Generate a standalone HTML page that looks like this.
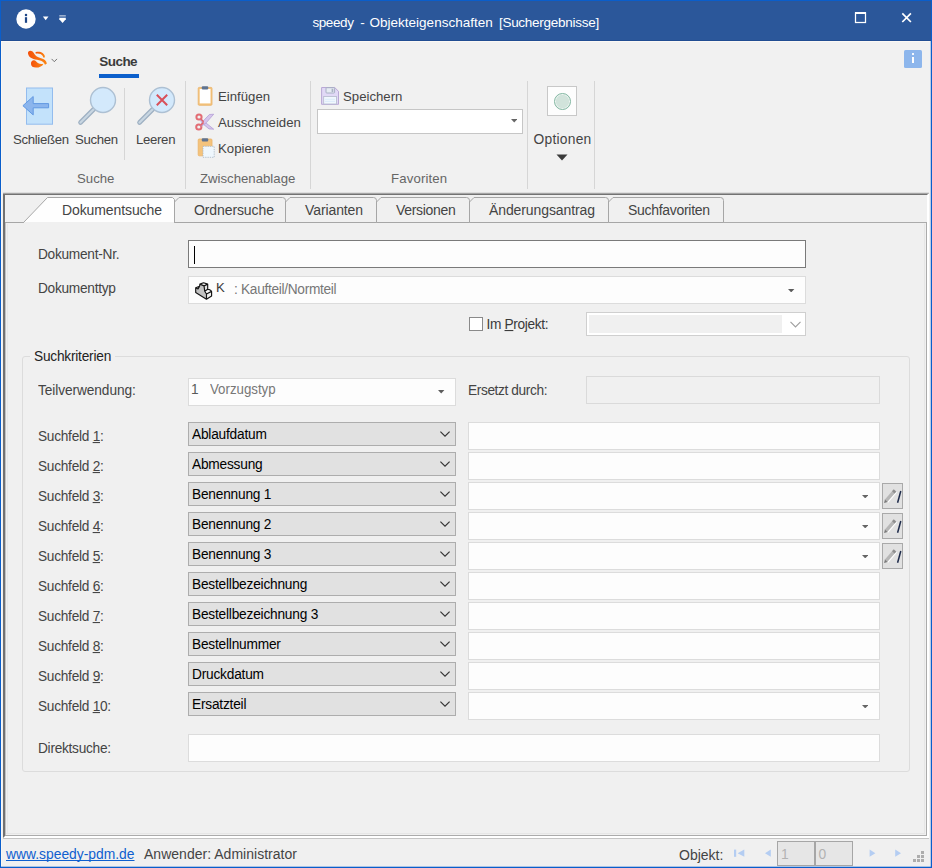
<!DOCTYPE html>
<html><head><meta charset="utf-8">
<style>
html,body{margin:0;padding:0;}
body{width:932px;height:868px;overflow:hidden;background:#f0f0f0;font-family:"Liberation Sans",sans-serif;font-size:13px;color:#444;position:relative;}
#win,#win *{position:absolute;box-sizing:border-box;}
#win{left:0;top:0;width:932px;height:868px;background:#f0f0f0;overflow:hidden;}
#bL{left:0;top:0;width:1px;height:868px;background:#0a5ecb;}
#bR{left:931px;top:0;width:1px;height:868px;background:#0a5ecb;}
#bT{left:0;top:0;width:932px;height:1px;background:#0a5ecb;}
#bB{left:0;top:867px;width:932px;height:1px;background:#0a5ecb;}
#title{left:1px;top:1px;width:930px;height:40px;background:#2b579a;}
#ttext{left:311.5px;top:13.5px;color:#fff;font-size:13.5px;line-height:16px;white-space:nowrap;}
.tt{top:13.5px;color:#fff;font-size:13.5px;line-height:16px;}
#ribbon{left:1px;top:41px;width:930px;height:152px;background:#f1f1f1;}
.t{white-space:nowrap;line-height:16px;}
.rt{color:#444;font-size:13.2px;}
.vsep{width:1px;background:#d6d6d6;top:81px;height:108px;}
.tabt{font-size:14px;color:#444;letter-spacing:-0.1px;margin-top:0.4px;}
.lbl{font-size:13.7px;color:#444;letter-spacing:-0.27px;transform:scaleY(1.07);transform-origin:0 80%;}
.gcombo{left:188px;width:268px;height:24px;background:#e1e1e1;border:1px solid #adadad;}
.gcombo .ctext{transform:scaleY(1.06);transform-origin:0 80%;left:3px;top:3.8px;font-size:13.7px;color:#000;letter-spacing:-0.2px;}
.gcombo .chev{right:4.6px;top:7.6px;}
.winput{left:468px;width:412px;height:28px;background:#fdfdfd;border:1px solid #dcdcdc;}
.winput .tri{right:10.7px;top:11.6px;}
.penbtn{left:882px;width:21px;height:26px;background:#e1e1e1;border:1px solid #a9a9a9;}
.penbtn svg{left:-1px;top:-1px;}
u{position:static !important;text-decoration:underline;text-decoration-skip-ink:none;text-underline-offset:1.3px;}
span.s{position:static !important;}
</style></head><body>
<div id="win">
  <div id="title">
    <div class="t tt" style="left:311.4px;letter-spacing:-0.39px">speedy</div><div class="t tt" style="left:359.2px;letter-spacing:0.00px">-</div><div class="t tt" style="left:368.4px;letter-spacing:0.02px">Objekteigenschaften</div><div class="t tt" style="left:497.9px;letter-spacing:-0.26px">[Suchergebnisse]</div>
    <!-- quick access -->
    <svg style="left:0px;top:0px" width="80" height="38" viewBox="0 0 80 38">
      <circle cx="25" cy="18" r="9.7" fill="#fff"/>
      <rect x="23.9" y="16.2" width="2.2" height="5.6" fill="#1f4788"/><circle cx="25" cy="13.9" r="1.25" fill="#1f4788"/>
      <path d="M41.9 15.6 h5.6 l-2.8 3.6z" fill="#fff"/>
      <rect x="58.3" y="14.2" width="6.5" height="1.3" fill="#fff" opacity="0.65"/><path d="M58.3 16.8 h6.5 v1.4 l-3.25 3.8 l-3.25 -3.8z" fill="#fff"/>
    </svg>
    <svg style="left:850px;top:8px" width="70" height="20" viewBox="0 0 70 20"><rect x="4.5" y="4" width="10" height="9.5" fill="none" stroke="#fff" stroke-width="1.25"/><rect x="4" y="3" width="11" height="2" fill="#fff"/><path d="M51.3 4.4 L59.9 13 M59.9 4.4 L51.3 13" stroke="#fff" stroke-width="1.7" fill="none"/></svg>
  </div>
  <div id="ribbon"></div>
  <!-- ribbon tab row -->
  <svg style="left:20px;top:42px" width="50" height="36" viewBox="0 0 50 36">
    <defs><linearGradient id="og" x1="0" y1="0" x2="1" y2="0"><stop offset="0" stop-color="#f4500a"/><stop offset="1" stop-color="#fb8612"/></linearGradient></defs>
    <g fill="url(#og)">
    <path d="M8 11.5 C7.6 8.2 12 7.8 13.8 11 C15.2 13.6 17 15.2 21 16.2 C24.2 17 26.2 18.5 26.9 21.5 L25 22.8 C24 19.8 22 18.8 19 18.2 C14 17.4 8.6 16.2 8 11.5 Z"/>
    <path d="M11 22 C10.8 18.3 14.2 17.3 16.2 19.6 C17.8 21.5 20 22.4 23.4 21.7 C22.6 24.2 19 25.7 16 25.6 C13 25.5 11.1 24.5 11 22 Z"/>
    <path d="M15.4 10.2 C18 9.4 21 9.7 22.6 11 C24.2 12.2 25.1 13.6 24.8 15.4 L23.2 15.6 C23 13.9 22 12.9 20.5 12.1 C19 11.4 17 11.4 15.9 11.7 Z"/>
    </g>
    <path d="M31.6 16.9 L34.3 19.7 L37 16.9" fill="none" stroke="#666" stroke-width="0.9"/>
  </svg>
  <div class="t" style="left:99.3px;top:53.6px;font-size:13.5px;font-weight:bold;color:#3b3b3b;letter-spacing:-0.55px">Suche</div>
  <div style="left:99px;top:74px;width:40px;height:4px;background:#0c60cc"></div>
  <div style="left:904px;top:50px;width:18px;height:18px;background:#8db6ec;border-radius:1.5px"></div>
  <div style="left:911.8px;top:56.5px;width:2.4px;height:6.8px;background:#fff"></div><div style="left:911.8px;top:53.4px;width:2.4px;height:1.9px;background:#f4f8fe"></div>

  <!-- group Suche -->
  <svg style="left:20px;top:86px" width="36" height="40" viewBox="0 0 36 40">
    <rect x="6.5" y="2" width="26" height="36.2" fill="#c3e2fb" stroke="#93bcee" stroke-width="1"/>
    <path d="M2.9 19.7 L13.2 10.5 L13.2 17.6 L28.6 17.6 L28.6 21.8 L13.2 21.8 L13.2 28.9 Z" fill="#8bb5ed" stroke="#6299e2" stroke-width="1" stroke-linejoin="round"/>
  </svg>
  <svg style="left:76px;top:84px" width="44" height="44" viewBox="0 0 44 44">
    <path d="M19 24 L4.5 38.5" stroke="#9eb0c2" stroke-width="4.6" stroke-linecap="round"/>
    <path d="M19 24 L4.5 38.5" stroke="#c9d6e2" stroke-width="2.2" stroke-linecap="round"/>
    <circle cx="27" cy="16" r="12.5" fill="#d3e9fc" stroke="#adc0d3" stroke-width="1.4"/>
  </svg>
  <div style="left:124px;top:88px;width:1px;height:72px;background:#d6d6d6"></div>
  <svg style="left:135px;top:84px" width="44" height="44" viewBox="0 0 44 44">
    <path d="M19 24 L4.5 38.5" stroke="#9eb0c2" stroke-width="4.6" stroke-linecap="round"/>
    <path d="M19 24 L4.5 38.5" stroke="#c9d6e2" stroke-width="2.2" stroke-linecap="round"/>
    <circle cx="27" cy="16" r="12.5" fill="#d3e9fc" stroke="#adc0d3" stroke-width="1.4"/>
    <path d="M21.8 10.8 L32.2 21.2 M32.2 10.8 L21.8 21.2" stroke="#d8505a" stroke-width="2"/>
  </svg>
  <div class="t rt" style="left:13px;top:132px;letter-spacing:-0.32px">Schließen</div>
  <div class="t rt" style="left:75px;top:132px;letter-spacing:-0.32px">Suchen</div>
  <div class="t rt" style="left:136px;top:132px;letter-spacing:-0.32px">Leeren</div>
  <div class="t rt" style="left:77px;top:170.5px;color:#666">Suche</div>
  <div class="vsep" style="left:185px"></div>

  <!-- group Zwischenablage -->
  <svg style="left:190px;top:80px" width="30" height="85" viewBox="0 0 30 85">
    <rect x="8.2" y="7.4" width="13.8" height="17.9" rx="1" fill="#f4c37c" stroke="#ebb267" stroke-width="0.8"/>
    <rect x="9.7" y="9" width="10.8" height="14.4" fill="#fff"/>
    <rect x="11.8" y="6.2" width="6.4" height="3.2" rx="1" fill="#5f7390"/>
    <circle cx="9" cy="37" r="2.6" fill="none" stroke="#e36d75" stroke-width="2"/>
    <circle cx="8.8" cy="47" r="2.6" fill="none" stroke="#e36d75" stroke-width="2"/>
    <path d="M11 39 L16 43 L23.7 49.2 L19 48.9 L12.6 43.6 L10.3 40.3Z" fill="#d5c5ec" stroke="#ad96d2" stroke-width="0.7" stroke-linejoin="round"/>
    <path d="M10.8 45 L13.6 40.6 L19.4 34.5 L23.7 34.2 L16.4 42.6 L11.5 46.3Z" fill="#d5c5ec" stroke="#ad96d2" stroke-width="0.7" stroke-linejoin="round"/>
    <path d="M10.5 38.8 L13.6 41.8 M10.6 45.3 L13.6 42.4" stroke="#e0656c" stroke-width="1.6"/>
    <rect x="8.2" y="59" width="13.8" height="16.8" rx="1" fill="#f4c37c" stroke="#ebb267" stroke-width="0.8"/>
    <rect x="11.8" y="58.2" width="6.4" height="3.2" rx="1" fill="#5f7390"/>
    <rect x="13" y="66.3" width="11.2" height="11" fill="#eff7fd" stroke="#a9b8c8" stroke-width="0.85" stroke-dasharray="1.3 1"/>
  </svg>
  <div class="t rt" style="left:218px;top:88.6px;">Einfügen</div>
  <div class="t rt" style="left:218px;top:114.6px;">Ausschneiden</div>
  <div class="t rt" style="left:218px;top:140.6px;">Kopieren</div>
  <div class="t rt" style="left:200px;top:170.5px;color:#666">Zwischenablage</div>
  <div class="vsep" style="left:310px"></div>

  <!-- group Favoriten -->
  <svg style="left:315px;top:82px" width="30" height="28" viewBox="0 0 30 28">
    <path d="M6.6 5.5 H19.7 L23.5 9.3 V22.3 H6.6 Z" fill="#e1d9f6" stroke="#b9a8d6" stroke-width="1"/>
    <rect x="11" y="5.7" width="8.6" height="5.3" rx="0.8" fill="#e6ebf3" stroke="#a3aabf" stroke-width="0.9"/>
    <rect x="16.6" y="6.8" width="1.7" height="3.2" fill="#aab1c4"/>
    <rect x="8.7" y="14.4" width="12.7" height="7.6" fill="#f1f8fe" stroke="#b4b9cc" stroke-width="0.8"/>
    <path d="M10 17.3 H20 M10 19.4 H20" stroke="#d6e9f9" stroke-width="0.8"/>
  </svg>
  <div class="t rt" style="left:343px;top:88.6px;">Speichern</div>
  <div style="left:317px;top:109px;width:206px;height:25px;background:#fff;border:1px solid #c6c6c6"></div>
  <svg style="left:510.8px;top:119.4px" width="6.4" height="3.4" viewBox="0 0 6.4 3.4"><path d="M0 0 H6.4 L3.2 3.4 Z" fill="#666"/></svg>
  <div class="t rt" style="left:391px;top:170.5px;color:#666;letter-spacing:0.15px">Favoriten</div>
  <div class="vsep" style="left:527px"></div>

  <!-- group Optionen -->
  <div style="left:547px;top:86px;width:30px;height:30px;background:#fdfdfd;border:1px solid #c8c8c8"></div>
  <div style="left:554px;top:93px;width:16.8px;height:16.8px;border-radius:8.4px;background:#d1e3db;border:1px solid #84b8a3;box-shadow:inset 0 0 0 0.8px #f2f7f5"></div>
  <div class="t rt" style="left:533.5px;top:131.6px;font-size:13.8px;letter-spacing:0.25px">Optionen</div>
  <svg style="left:555.9px;top:153.8px" width="12" height="7" viewBox="0 0 12 7"><path d="M0.5 0.5 H11.5 L6 6.5 Z" fill="#3a3a3a"/></svg>
  <div class="vsep" style="left:594px"></div>

  <!-- sunken frame -->
  <div style="left:3px;top:193px;width:926px;height:645px;border:2px solid #727272;border-right-color:#fff;border-bottom-color:#fff;"></div>
  <div style="left:3px;top:193px;width:925px;height:1px;background:#a4a4a4"></div><div style="left:3px;top:192px;width:926px;height:1px;background:#dedede"></div><div style="left:5px;top:195px;width:922px;height:1px;background:#f9f9f9"></div>
  <div style="left:5px;top:195px;width:922px;height:641px;background:#f0f0f0;"></div>

  <!-- tab panel -->
  <div style="left:5px;top:222px;width:922px;height:614px;border:1px solid #ababab;border-left:none;background:#f0f0f0"></div><div style="left:3px;top:838px;width:926px;height:1px;background:#c4c4c4"></div><div style="left:924px;top:224px;width:1px;height:610px;background:#e6e6e6"></div><div style="left:5px;top:223px;width:1px;height:612px;background:#c2c2c2"></div><div style="left:7px;top:224px;width:1px;height:609px;background:#e8e8e8"></div><div style="left:6px;top:833px;width:919px;height:1px;background:#e6e6e6"></div>
  <!-- tabs -->
  <svg style="left:5px;top:196px" width="725" height="28" viewBox="0 0 725 28">
    <g fill="#f0f0f0" stroke="#a6a6a6" stroke-width="1">
      <path d="M169.5 26.5 V6 L174.0 1.5 H277.5 Q280.5 1.5 280.5 4.5 V26.5 Z"/>
      <path d="M280.5 26.5 V6 L285.0 1.5 H368.5 Q371.5 1.5 371.5 4.5 V26.5 Z"/>
      <path d="M371.5 26.5 V6 L376.0 1.5 H461.5 Q464.5 1.5 464.5 4.5 V26.5 Z"/>
      <path d="M464.5 26.5 V6 L469.0 1.5 H600.5 Q603.5 1.5 603.5 4.5 V26.5 Z"/>
      <path d="M603.5 26.5 V6 L608.0 1.5 H715.5 Q718.5 1.5 718.5 4.5 V26.5 Z"/>
      </g>
    <path d="M18.5 26 L42.5 1.5 H167.5 L169.5 3.5 V26 Z" fill="#fefefe"/>
    <rect x="19" y="26" width="150" height="1" fill="#f0f0f0"/>
    <path d="M0 26.5 H18.5 L42.5 1.5 H167.5 L169.5 3.5 V26.5" fill="none" stroke="#a6a6a6" stroke-width="1"/>
  </svg>
  <div class="t tabt" style="left:62px;top:202px;">Dokumentsuche</div>
  <div class="t tabt" style="left:194px;top:202px;">Ordnersuche</div>
  <div class="t tabt" style="left:305px;top:202px;">Varianten</div>
  <div class="t tabt" style="left:396px;top:202px;letter-spacing:-0.3px">Versionen</div>
  <div class="t tabt" style="left:489px;top:202px;">Änderungsantrag</div>
  <div class="t tabt" style="left:628px;top:202px;letter-spacing:-0.3px">Suchfavoriten</div>

  <!-- top form -->
  <div class="t lbl" style="left:38px;top:246.7px;">Dokument-Nr.</div>
  <div style="left:188px;top:240px;width:618px;height:28px;background:#fdfdfd;border:1px solid #7a7a7a"></div>
  <div style="left:194px;top:245.5px;width:1px;height:18px;background:#000"></div>
  <div class="t lbl" style="left:38px;top:280.7px;">Dokumenttyp</div>
  <div style="left:188px;top:276px;width:618px;height:28px;background:#fdfdfd;border:1px solid #dcdcdc"></div>
  <svg style="left:186px;top:272px" width="30" height="32" viewBox="0 0 30 32"><g transform="translate(17.6 19) scale(0.93) translate(-17.5 -19)">
    <path d="M9 15.45 L13.2 13.85 L13.5 11.6 L18 13.5 L18.7 19.3 L20.6 22.2 L20.6 27.8 L9 20.6Z" fill="#c2c2c2"/>
    <path d="M13.5 11.6 L17.4 10.2 L21.9 11.6 L18 13.5Z" fill="#fafafa"/>
    <path d="M18 13.5 L21.9 11.6 L21.9 17.1 L18.7 19.3Z" fill="#e2e2e2"/>
    <path d="M18.7 19.3 L21.9 17.1 L26.1 19.3 L20.6 22.2Z" fill="#fafafa"/>
    <path d="M20.6 22.2 L26.1 19.3 L26.1 24.5 L20.6 27.8Z" fill="#eeeeee"/>
    <path d="M9 15.45 L13.2 13.85 L13.5 11.6 L17.4 10.2 L21.9 11.6 L21.9 17.1 Q25.5 17.6 26.1 19.6 L26.1 24.5 L20.6 27.8 L9 20.6Z M13.5 11.6 L18 13.5 L21.9 11.6 M18 13.5 L18.7 19.3 L20.6 22.2 L20.6 27.8 M18.7 19.3 L21.9 17.1 M20.6 22.2 L26.1 19.4 M9 15.45 L11.5 16.8 L13.2 13.85" fill="none" stroke="#141414" stroke-width="1.25" stroke-linejoin="round"/>
  </g></svg>
  <div class="t" style="left:216px;top:279.5px;font-size:13.2px;color:#3a3a3a">K</div>
  <div class="t" style="left:234px;top:282px;font-size:13.7px;color:#777;letter-spacing:-0.3px;transform:scaleY(1.06);transform-origin:0 80%">: Kaufteil/Normteil</div>
  <svg style="left:788.2px;top:288.6px" width="6.4" height="3.4" viewBox="0 0 6.4 3.4"><path d="M0 0 H6.4 L3.2 3.4 Z" fill="#5c5c5c"/></svg>

  <div style="left:469px;top:317px;width:14px;height:14px;background:#fff;border:1px solid #8a8a8a"></div>
  <div class="t lbl" style="left:486.5px;top:317px;letter-spacing:-0.33px;color:#3a3a3a">Im <u>P</u>rojekt:</div>
  <div style="left:586px;top:312px;width:220px;height:24px;background:#fff;border:1px solid #cfcfcf"></div>
  <div style="left:589px;top:315px;width:193px;height:18px;background:#f0f0f0;"></div>
  <svg style="left:790px;top:321px" width="11" height="7" viewBox="0 0 11 7"><path d="M0.5 0.8 L5.5 5.8 L10.5 0.8" fill="none" stroke="#a0a0a0" stroke-width="1.2"/></svg>

  <!-- group box -->
  <div style="left:22px;top:356px;width:888px;height:416px;border:1px solid #dcdcdc;border-radius:3px;"></div>
  <div class="t" style="left:30px;top:348.7px;padding:0 4px;background:#f0f0f0;font-size:13.7px;color:#222;letter-spacing:-0.22px;transform:scaleY(1.07);transform-origin:0 80%">Suchkriterien</div>

  <div class="t lbl" style="left:38px;top:383px;letter-spacing:-0.08px">Teilverwendung:</div>
  <div style="left:188px;top:378px;width:268px;height:28px;background:#fdfdfd;border:1px solid #dcdcdc"></div>
  <div class="t" style="left:191px;top:382px;font-size:13.7px;color:#5a5a5a;transform:scaleY(1.06);transform-origin:0 80%">1</div>
  <div class="t" style="left:210px;top:382px;font-size:13.3px;color:#777;letter-spacing:-0.02px;transform:scaleY(1.06);transform-origin:0 80%">Vorzugstyp</div>
  <svg style="left:438.3px;top:390.4px" width="6.4" height="3.4" viewBox="0 0 6.4 3.4"><path d="M0 0 H6.4 L3.2 3.4 Z" fill="#5c5c5c"/></svg>
  <div class="t lbl" style="left:468px;top:383px;letter-spacing:-0.38px">Ersetzt durch:</div>
  <div style="left:586px;top:376px;width:294px;height:28px;background:#f0f0f0;border:1px solid #dadada"></div>

  <div class="t lbl" style="left:38px;top:428.6px">Suchfeld <u>1</u>:</div>
<div class="gcombo" style="top:422px"><span class="t ctext">Ablaufdatum</span><svg class="chev" width="10" height="6" viewBox="0 0 10 6"><path d="M0.4 0.6 L5 5.2 L9.6 0.6" fill="none" stroke="#333" stroke-width="1.15"/></svg></div>
<div class="winput" style="top:422px"></div>
<div class="t lbl" style="left:38px;top:458.6px">Suchfeld <u>2</u>:</div>
<div class="gcombo" style="top:452px"><span class="t ctext">Abmessung</span><svg class="chev" width="10" height="6" viewBox="0 0 10 6"><path d="M0.4 0.6 L5 5.2 L9.6 0.6" fill="none" stroke="#333" stroke-width="1.15"/></svg></div>
<div class="winput" style="top:452px"></div>
<div class="t lbl" style="left:38px;top:488.6px">Suchfeld <u>3</u>:</div>
<div class="gcombo" style="top:482px"><span class="t ctext">Benennung 1</span><svg class="chev" width="10" height="6" viewBox="0 0 10 6"><path d="M0.4 0.6 L5 5.2 L9.6 0.6" fill="none" stroke="#333" stroke-width="1.15"/></svg></div>
<div class="winput" style="top:482px"><svg class="tri" width="6.4" height="3.4" viewBox="0 0 6.4 3.4"><path d="M0 0 H6.4 L3.2 3.4 Z" fill="#666"/></svg></div>
<div class="penbtn" style="top:483px"><svg width="21" height="26" viewBox="0 0 21 26"><path d="M5.8 19.3 L14.6 9.2" stroke="#fff" stroke-width="1.1" fill="none"/><path d="M3.9 17.9 L12.6 7.9" stroke="#b6b6b6" stroke-width="3.3" fill="none"/><path d="M11.3 9.4 L13 7.4" stroke="#8e8e8e" stroke-width="3.3" fill="none"/><path d="M2.1 19.9 L2.9 16.6 L5.5 18.9 Z" fill="#7a7a7a"/><path d="M18.8 8 L15.6 19.8" stroke="#1d2a4a" stroke-width="1.5" fill="none"/></svg></div>
<div class="t lbl" style="left:38px;top:518.6px">Suchfeld <u>4</u>:</div>
<div class="gcombo" style="top:512px"><span class="t ctext">Benennung 2</span><svg class="chev" width="10" height="6" viewBox="0 0 10 6"><path d="M0.4 0.6 L5 5.2 L9.6 0.6" fill="none" stroke="#333" stroke-width="1.15"/></svg></div>
<div class="winput" style="top:512px"><svg class="tri" width="6.4" height="3.4" viewBox="0 0 6.4 3.4"><path d="M0 0 H6.4 L3.2 3.4 Z" fill="#666"/></svg></div>
<div class="penbtn" style="top:513px"><svg width="21" height="26" viewBox="0 0 21 26"><path d="M5.8 19.3 L14.6 9.2" stroke="#fff" stroke-width="1.1" fill="none"/><path d="M3.9 17.9 L12.6 7.9" stroke="#b6b6b6" stroke-width="3.3" fill="none"/><path d="M11.3 9.4 L13 7.4" stroke="#8e8e8e" stroke-width="3.3" fill="none"/><path d="M2.1 19.9 L2.9 16.6 L5.5 18.9 Z" fill="#7a7a7a"/><path d="M18.8 8 L15.6 19.8" stroke="#1d2a4a" stroke-width="1.5" fill="none"/></svg></div>
<div class="t lbl" style="left:38px;top:548.6px">Suchfeld <u>5</u>:</div>
<div class="gcombo" style="top:542px"><span class="t ctext">Benennung 3</span><svg class="chev" width="10" height="6" viewBox="0 0 10 6"><path d="M0.4 0.6 L5 5.2 L9.6 0.6" fill="none" stroke="#333" stroke-width="1.15"/></svg></div>
<div class="winput" style="top:542px"><svg class="tri" width="6.4" height="3.4" viewBox="0 0 6.4 3.4"><path d="M0 0 H6.4 L3.2 3.4 Z" fill="#666"/></svg></div>
<div class="penbtn" style="top:543px"><svg width="21" height="26" viewBox="0 0 21 26"><path d="M5.8 19.3 L14.6 9.2" stroke="#fff" stroke-width="1.1" fill="none"/><path d="M3.9 17.9 L12.6 7.9" stroke="#b6b6b6" stroke-width="3.3" fill="none"/><path d="M11.3 9.4 L13 7.4" stroke="#8e8e8e" stroke-width="3.3" fill="none"/><path d="M2.1 19.9 L2.9 16.6 L5.5 18.9 Z" fill="#7a7a7a"/><path d="M18.8 8 L15.6 19.8" stroke="#1d2a4a" stroke-width="1.5" fill="none"/></svg></div>
<div class="t lbl" style="left:38px;top:578.6px">Suchfeld <u>6</u>:</div>
<div class="gcombo" style="top:572px"><span class="t ctext">Bestellbezeichnung</span><svg class="chev" width="10" height="6" viewBox="0 0 10 6"><path d="M0.4 0.6 L5 5.2 L9.6 0.6" fill="none" stroke="#333" stroke-width="1.15"/></svg></div>
<div class="winput" style="top:572px"></div>
<div class="t lbl" style="left:38px;top:608.6px">Suchfeld <u>7</u>:</div>
<div class="gcombo" style="top:602px"><span class="t ctext">Bestellbezeichnung 3</span><svg class="chev" width="10" height="6" viewBox="0 0 10 6"><path d="M0.4 0.6 L5 5.2 L9.6 0.6" fill="none" stroke="#333" stroke-width="1.15"/></svg></div>
<div class="winput" style="top:602px"></div>
<div class="t lbl" style="left:38px;top:638.6px">Suchfeld <u>8</u>:</div>
<div class="gcombo" style="top:632px"><span class="t ctext">Bestellnummer</span><svg class="chev" width="10" height="6" viewBox="0 0 10 6"><path d="M0.4 0.6 L5 5.2 L9.6 0.6" fill="none" stroke="#333" stroke-width="1.15"/></svg></div>
<div class="winput" style="top:632px"></div>
<div class="t lbl" style="left:38px;top:668.6px">Suchfeld <u>9</u>:</div>
<div class="gcombo" style="top:662px"><span class="t ctext">Druckdatum</span><svg class="chev" width="10" height="6" viewBox="0 0 10 6"><path d="M0.4 0.6 L5 5.2 L9.6 0.6" fill="none" stroke="#333" stroke-width="1.15"/></svg></div>
<div class="winput" style="top:662px"></div>
<div class="t lbl" style="left:38px;top:698.6px">Suchfeld <u>1</u>0:</div>
<div class="gcombo" style="top:692px"><span class="t ctext">Ersatzteil</span><svg class="chev" width="10" height="6" viewBox="0 0 10 6"><path d="M0.4 0.6 L5 5.2 L9.6 0.6" fill="none" stroke="#333" stroke-width="1.15"/></svg></div>
<div class="winput" style="top:692px"><svg class="tri" width="6.4" height="3.4" viewBox="0 0 6.4 3.4"><path d="M0 0 H6.4 L3.2 3.4 Z" fill="#666"/></svg></div>

  <div class="t lbl" style="left:38px;top:741px;">Direktsuche:</div>
  <div style="left:188px;top:734px;width:692px;height:28px;background:#fdfdfd;border:1px solid #dcdcdc"></div>

  <!-- status bar -->
  <div class="t" style="left:6px;top:845.6px;font-size:13.85px;color:#0f5fcf;text-decoration:underline;text-decoration-skip-ink:none;text-underline-offset:1.2px;text-decoration-thickness:1px">www.speedy-pdm.de</div>
  <div class="t" style="left:144px;top:845.6px;font-size:14px;color:#444;letter-spacing:0.02px">Anwender: Administrator</div>
  <div class="t" style="left:679px;top:846.8px;font-size:14px;color:#444;">Objekt:</div>
  <svg style="left:732px;top:846px" width="30" height="14" viewBox="0 0 30 14"><rect x="2" y="3.6" width="2.2" height="7.2" fill="#b4cdf2"/><path d="M12.3 3.6 V10.8 L5.6 7.2 Z" fill="#b4cdf2"/></svg>
  <svg style="left:762px;top:846px" width="14" height="14" viewBox="0 0 14 14"><path d="M8.8 3.6 V10.8 L3 7.2 Z" fill="#b4cdf2"/></svg>
  <div style="left:777px;top:841px;width:38px;height:25px;background:#e6e6e6;border:1px solid #a6a6a6"></div>
  <div style="left:815px;top:841px;width:38px;height:25px;background:#e6e6e6;border:1px solid #a6a6a6"></div>
  <div class="t" style="left:781px;top:847px;font-size:13.8px;color:#b2b2b2;">1</div>
  <div class="t" style="left:818.5px;top:847px;font-size:13.8px;color:#b2b2b2;">0</div>
  <svg style="left:866px;top:846px" width="14" height="14" viewBox="0 0 14 14"><path d="M3.6 3.6 V10.8 L9.4 7.2 Z" fill="#b4cdf2"/></svg>
  <svg style="left:892px;top:846px" width="14" height="14" viewBox="0 0 14 14"><path d="M3.2 3.6 V10.8 L9 7.2 Z" fill="#b4cdf2"/></svg>
  <svg style="left:913px;top:851px" width="12" height="12" viewBox="0 0 12 12" fill="#adadad"><rect x="8" y="0" width="3" height="3"/><rect x="4" y="4" width="3" height="3"/><rect x="8" y="4" width="3" height="3"/><rect x="0" y="8" width="3" height="3"/><rect x="4" y="8" width="3" height="3"/><rect x="8" y="8" width="3" height="3"/></svg>

  <div style="left:1px;top:41px;width:1px;height:826px;background:#faf6f1"></div><div style="left:1px;top:41px;width:929px;height:1px;background:#fbf8f4"></div><div style="left:1px;top:40px;width:930px;height:1px;background:#214d92"></div><div style="left:930px;top:41px;width:1px;height:826px;background:rgba(10,94,203,0.25)"></div><div style="left:1px;top:866px;width:930px;height:1px;background:rgba(10,94,203,0.3)"></div><div id="bL"></div><div id="bR"></div><div id="bT"></div><div id="bB"></div>
</div>
</body></html>
